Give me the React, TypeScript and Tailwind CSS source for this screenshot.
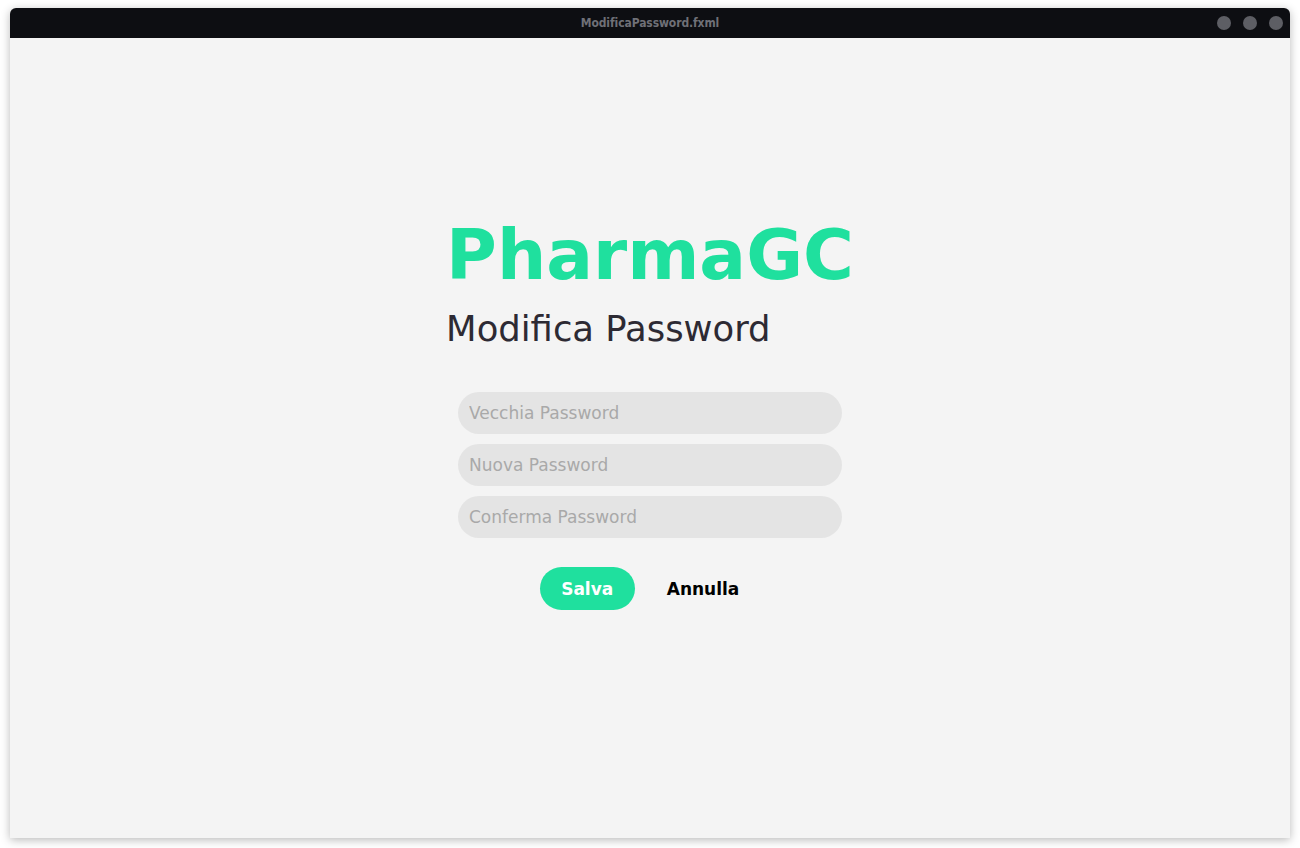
import React from "react";

const fields = ["Vecchia Password", "Nuova Password", "Conferma Password"];

const App = () => {
	return (
		<div className="w-[1300px] h-[848px] bg-white pt-2 px-[10px] font-['DejaVu_Sans',sans-serif]">
			<div className="h-[830px] flex flex-col rounded-t-[6px] overflow-hidden bg-[#f4f4f4] shadow-[0_2px_10px_rgba(0,0,0,0.28)]">
				<div className="h-[30px] shrink-0 bg-[#0d0e12] relative flex items-center justify-center">
					<span className="text-[12px] font-bold text-[#6f7077] tracking-[-0.1px] font-['DejaVu_Sans_Condensed','DejaVu_Sans',sans-serif]">
						ModificaPassword.fxml
					</span>
					<div className="absolute right-[7px] top-[8px] flex gap-[12px]">
						<span className="w-[14px] h-[14px] rounded-full bg-[#5d5e64]" />
						<span className="w-[14px] h-[14px] rounded-full bg-[#5d5e64]" />
						<span className="w-[14px] h-[14px] rounded-full bg-[#5d5e64]" />
					</div>
				</div>
				<div className="flex-1 flex flex-col items-center pt-[183px]">
					<div className="flex flex-col">
						<h1 className="text-[69.3px] leading-none font-bold text-[#1fe09e]">PharmaGC</h1>
						<h2 className="mt-[21px] text-[35.4px] leading-none text-[#2d2a33]">Modifica Password</h2>
					</div>
					<div className="mt-[45px] flex flex-col gap-[10px]">
						{fields.map((f) => (
							<input
								key={f}
								type="password"
								placeholder={f}
								className="w-[384px] h-[42px] rounded-full bg-[#e4e4e4] px-[11px] text-[17px] text-[#333] placeholder:text-[#a9a9a9] outline-none"
							/>
						))}
					</div>
					<div className="mt-[29px] ml-[2px] flex items-center gap-[9px]">
						<button className="h-[43px] pt-[3px] px-[21.5px] rounded-full bg-[#1fe09e] text-white text-[17px] font-bold">
							Salva
						</button>
						<button className="h-[43px] pt-[3px] px-[23px] rounded-full text-black text-[17px] font-bold">
							Annulla
						</button>
					</div>
				</div>
			</div>
		</div>
	);
};

export default App;
